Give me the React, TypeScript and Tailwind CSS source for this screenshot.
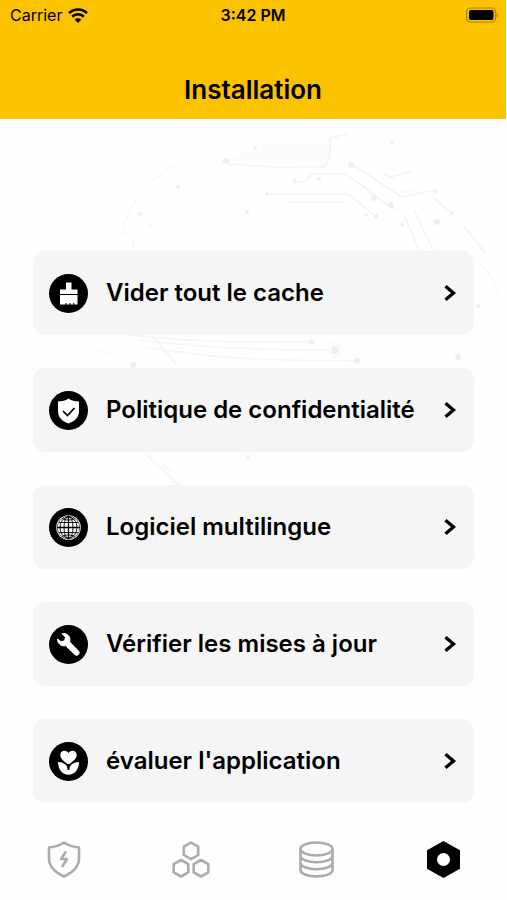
import type { ReactNode } from "react";

const menuItems: { label: string; icon: ReactNode }[] = [
  {
    label: "Vider tout le cache",
    icon: (
      <>
        <path fill="#fff" d="M17 8.500h5.500v7h6V20h-17.500v-4.500h6z" />
        <path fill="#fff" d="M11 21h17.500v9.500h-3.300V29h-1v1.500h-2.800V29h-1v1.500h-2.800V29h-1v1.500H11z" />
      </>
    ),
  },
  {
    label: "Politique de confidentialité",
    icon: (
      <>
        <path fill="#fff" d="M19.500 7.500c3 2.300 6.500 3 10.500 3V20c0 6.500-4 10-10.500 12.500C13 30 9 26.500 9 20v-9.500c4 0 7.500-.7 10.500-3z" />
        <path fill="none" stroke="#000" strokeWidth="1.700" d="m14 20 4.500 4.500 7-7.500" />
      </>
    ),
  },
  {
    label: "Logiciel multilingue",
    icon: (
      <>
        <circle cx="19.500" cy="19.500" r="12.300" fill="#fff" />
        <g fill="none" stroke="#000" strokeWidth="0.900">
          <circle cx="19.500" cy="19.500" r="11.300" strokeWidth="0.600" />
          <path strokeWidth="1.300" d="M19.500 8v23M8 19.500h23" />
          <path d="M10 14.500h19M10 24.500h19M13 10.500c4 2 9 2 13 0M13 28.500c4-2 9-2 13 0" />
          <ellipse cx="19.500" cy="19.500" rx="4.500" ry="11.300" />
          <ellipse cx="19.500" cy="19.500" rx="8.500" ry="10.500" />
        </g>
      </>
    ),
  },
  {
    label: "Vérifier les mises à jour",
    icon: (
      <path
        fill="#fff"
        stroke="#fff"
        strokeWidth="1"
        strokeLinejoin="round"
        d="M13.200 8.700c3.800-.9 7.600 1.900 7.700 5.800.1.900-.1 1.700-.3 2.400l8.800 9c2.400 2.400-1.200 5.900-3.600 3.600l-9.100-8.900c-4.300 1.200-8.300-2.100-8.200-6.600l3.600 2.700 3.500-1 .9-3.400z"
      />
    ),
  },
  {
    label: "évaluer l'application",
    icon: (
      <>
        <path fill="#fff" d="M19.500 22.700c-5-3.500-8.200-6.200-8.200-9.700 0-4.700 5.700-5.700 8.200-2 2.500-3.700 8.200-2.700 8.200 2 0 3.500-3.200 6.200-8.200 9.700z" />
        <path fill="#fff" d="M9 20c5.500.2 9.300 2.800 9.900 7.500h1.200c.6-4.700 4.400-7.300 9.900-7.500 0 7.500-4.500 12.700-10.500 12.700S9 27.500 9 20z" />
        <path stroke="#000" strokeWidth="1.700" d="M19.500 22v6" />
      </>
    ),
  },
];

const tabs: { label: string; icon: ReactNode }[] = [
  {
    label: "Protection",
    icon: (
      <>
        <path d="M20 2.500c4.500 3 10 4.500 15 5v11c0 8.500-6.500 14-15 18C11.500 32.500 5 27 5 18.500v-11c5-.5 10.500-2 15-5z" />
        <path d="m22 11.500-5 7.500h6l-5 8" />
      </>
    ),
  },
  {
    label: "Modules",
    icon: (
      <path d="m20 2.500 7.200 4.200V15L20 19.200 12.800 15V6.700zM10 20l7.300 4.200v8.100L10 36.500l-7.300-4.200v-8.100zM30 20l7.300 4.200v8.100L30 36.500l-7.300-4.200v-8.100z" />
    ),
  },
  {
    label: "Stockage",
    icon: (
      <>
        <ellipse cx="19.500" cy="9" rx="16" ry="6.500" />
        <path d="M3.500 9v21c0 8.500 32 8.500 32 0V9M3.500 15.500c0 9 32 9 32 0M3.500 22.500c0 9 32 9 32 0" />
      </>
    ),
  },
  {
    label: "Installation",
    icon: (
      <path
        fill="#000"
        stroke="none"
        fillRule="evenodd"
        d="M19.500 1 36 10.200v18.600L19.500 38 3 28.800V10.200zM19.500 13a6.500 6.500 0 1 0 0 13 6.500 6.500 0 0 0 0-13z"
      />
    ),
  },
];

function CircuitArt() {
  return (
    <svg viewBox="0 119 507 381" className="absolute inset-x-0 top-0 w-full" fill="none" stroke="#f3f3f3" strokeWidth="1.500" aria-hidden="true">
      <path fill="#fcfcfc" stroke="none" d="m223 160 43-15h64v16l-5 6z" />
      <path d="m222 160 7 4 45 3h51l5-12v-17l17-4" />
      <path d="M295 178v4h10l7-8h34l42 31 8 4M267 194h81l28 23" />
      <path d="m350 163 52 34 33-7M382 173l9 4 22-6" />
      <path d="m405 217 16 38M414 210l19 40M432 197l20 16M464 226l22 28" />
      <path d="m133 250v-13l-10-5c2-12 7-24 15-33M150 182l25-18M284 202h60M400 192l20-3" stroke="#f7f7f7" />
      <path d="M470 255c14 10 26 26 30 43M97 350l20 6" stroke="#f8f8f8" />
      <path d="M130 335c50 6 110 8 180 7M140 340c60 8 120 10 190 10M145 347c60 10 110 14 212 14M155 338l22 28M145 454l35 32M162 465l10 6" stroke="#f5f5f5" />
      <circle cx="335" cy="350" r="7" stroke="#f5f5f5" strokeWidth="1" />
      <g fill="#efefef" stroke="none">
        <circle cx="312" cy="342" r="3" />
        <circle cx="335" cy="350" r="4" />
        <circle cx="357" cy="361" r="3" />
        <circle cx="458" cy="357" r="3" />
        <circle cx="248" cy="457" r="2" />
        <circle cx="133" cy="365" r="3" />
        <circle cx="226" cy="161" r="3" />
        <circle cx="295" cy="181" r="2" />
        <circle cx="319" cy="179" r="2" />
        <circle cx="267" cy="194" r="2" />
        <circle cx="351" cy="165" r="3" />
        <circle cx="374" cy="198" r="3" />
        <circle cx="391" cy="205" r="3" />
        <circle cx="366" cy="215" r="2" />
        <circle cx="376" cy="216" r="2" />
        <circle cx="402" cy="225" r="2" />
        <circle cx="437" cy="222" r="3" />
        <circle cx="435" cy="191" r="2" />
        <circle cx="452" cy="213" r="2" />
        <circle cx="392" cy="143" r="2" />
        <circle cx="381" cy="157" r="1" />
        <circle cx="247" cy="212" r="2" />
        <circle cx="178" cy="187" r="2" />
        <circle cx="140" cy="214" r="2" />
        <circle cx="151" cy="225" r="1" />
        <circle cx="230" cy="189" r="1" />
        <circle cx="255" cy="148" r="2" />
        <circle cx="478" cy="306" r="2" />
      </g>
    </svg>
  );
}

function StatusBar() {
  return (
    <div className="grid grid-cols-3 items-center px-2 pt-[3px] text-base leading-6">
      <div className="flex items-center gap-1.5 pl-0.5">
        <span>Carrier</span>
        <svg viewBox="0 0 20 15" className="h-[15px] w-5" fill="none" stroke="#000" strokeWidth="2.600" aria-hidden="true">
          <path d="M1 5.200c5-5 13-5 18 0M4.200 8.700c3.300-3.200 8.300-3.200 11.600 0" />
          <path fill="#000" stroke="none" d="m10 15-3.300-3.600c1.900-1.700 4.700-1.700 6.600 0z" />
        </svg>
      </div>
      <span className="text-center font-semibold">3:42 PM</span>
      <svg viewBox="0 0 33 16" className="h-4 w-[33px] justify-self-end" aria-hidden="true">
        <rect x="1.600" y="1" width="29" height="14" rx="4" fill="none" stroke="#a78300" strokeWidth="1.200" />
        <rect x="4" y="3" width="24.500" height="10" rx="2" />
        <path fill="#a78300" d="M31.700 5.500c1.600.8 1.600 4.200 0 5z" />
      </svg>
    </div>
  );
}

export default function App() {
  return (
    <div className="min-h-screen bg-[#fefefe] font-['Inter','Liberation_Sans',sans-serif] text-black">
      <header className="mr-px h-[119px] bg-[#fbc200]">
        <StatusBar />
        <h1 className="mt-[45px] text-center text-[26px] leading-9 font-semibold">Installation</h1>
      </header>

      <main className="relative">
        <CircuitArt />
        <ul className="relative flex flex-col gap-[33px] px-[33px] pt-[132px]">
          {menuItems.map((item) => (
            <li key={item.label}>
              <button type="button" className="flex h-[84px] w-full items-center rounded-xl bg-[#f5f5f5] px-4 text-left">
                <svg viewBox="0 0 39 39" className="size-[39px] shrink-0" aria-hidden="true">
                  <circle cx="19.500" cy="19.500" r="19.500" />
                  {item.icon}
                </svg>
                <span className="ml-[18px] flex-1 text-2xl font-semibold whitespace-nowrap">{item.label}</span>
                <svg viewBox="0 0 16 18" className="h-[18px] w-4 shrink-0" fill="none" stroke="#000" strokeWidth="3.300" aria-hidden="true">
                  <path d="M3.500 2.200 11.500 9l-8 6.800" />
                </svg>
              </button>
            </li>
          ))}
        </ul>
      </main>

      <nav className="mt-5 grid grid-cols-4 py-[17px]">
        {tabs.map((tab) => (
          <button key={tab.label} type="button" aria-label={tab.label} className="flex justify-center">
            <svg viewBox="0 0 39 39" className="size-[39px]" fill="none" stroke="#acacac" strokeWidth="2.600" strokeLinejoin="round" aria-hidden="true">
              {tab.icon}
            </svg>
          </button>
        ))}
      </nav>
    </div>
  );
}
